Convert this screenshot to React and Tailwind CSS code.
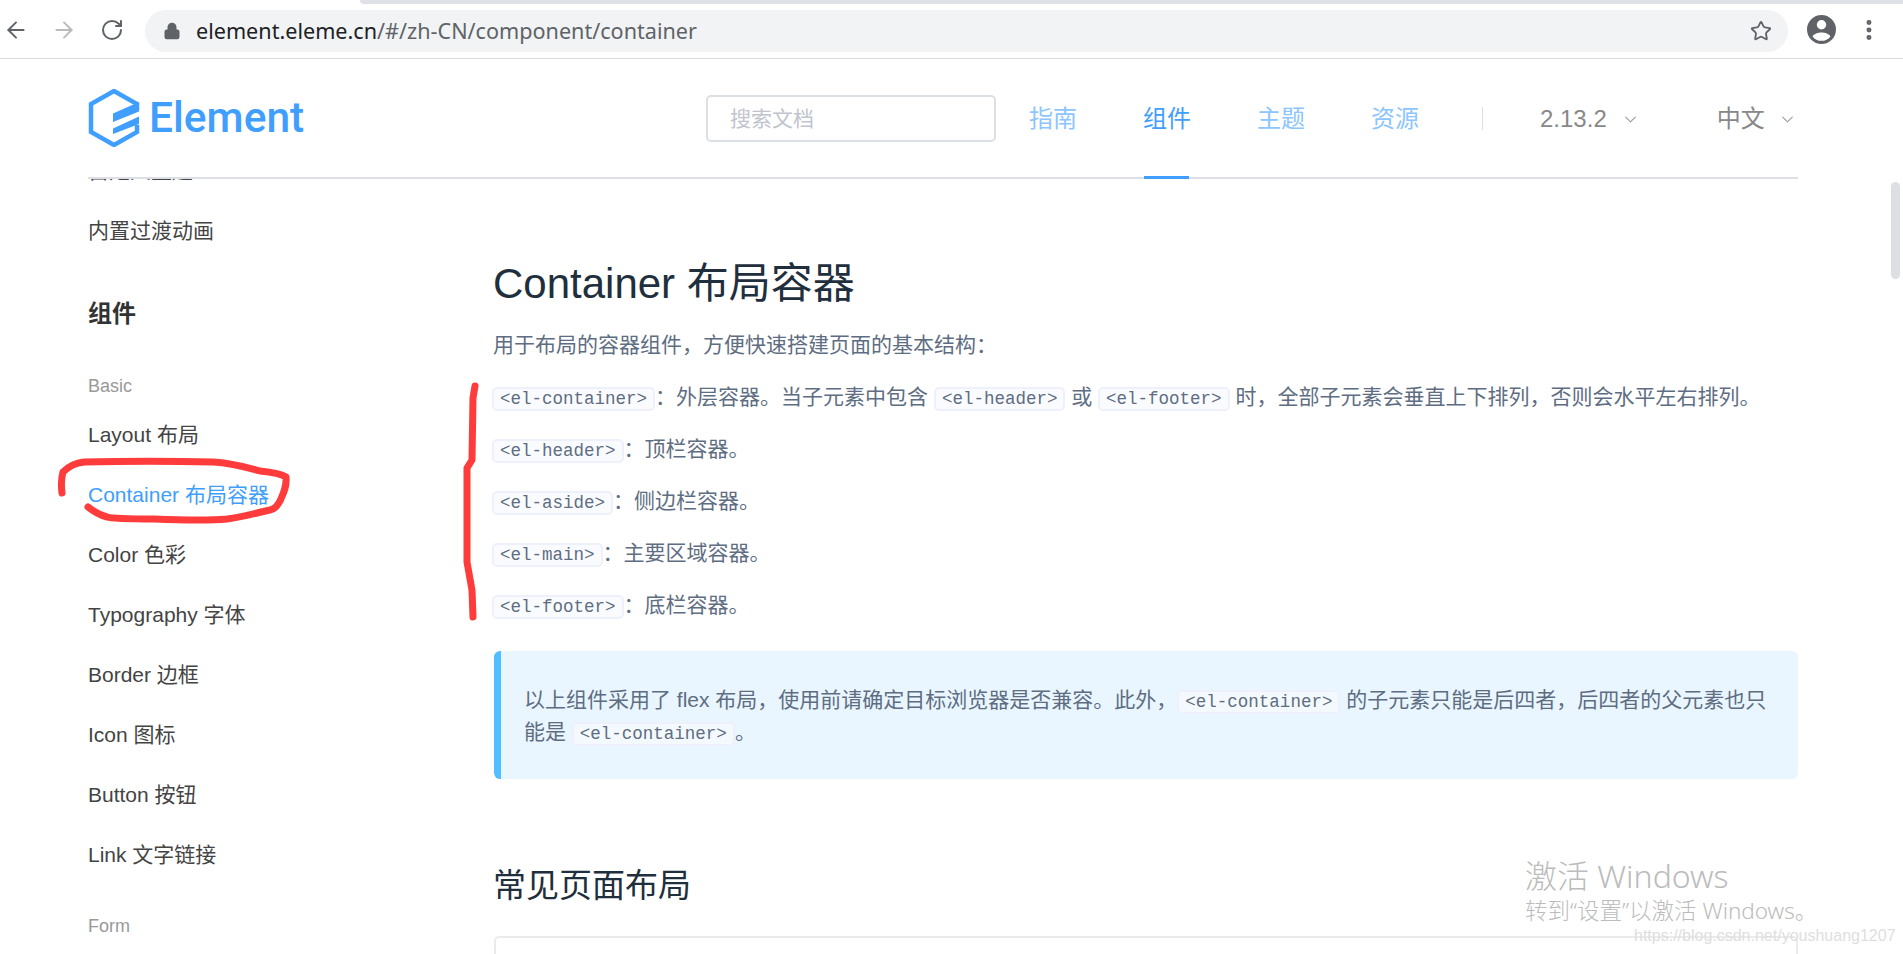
import React from 'react';
import { ArrowLeft, ArrowRight, RotateCw, Lock, Star, MoreVertical, ChevronDown } from 'lucide-react';

const sans = "font-['Liberation_Sans','Noto_Sans_CJK_SC',sans-serif]";

const menu = ['Layout 布局', 'Container 布局容器', 'Color 色彩', 'Typography 字体', 'Border 边框', 'Icon 图标', 'Button 按钮', 'Link 文字链接'];

const tags = [
  ['<el-header>', '：顶栏容器。'],
  ['<el-aside>', '：侧边栏容器。'],
  ['<el-main>', '：主要区域容器。'],
  ['<el-footer>', '：底栏容器。'],
];

const Code = ({ children, tip }) => (
  <code
    className={`inline-block h-[24px] px-[6px] rounded-[5px] border-2 border-[#eef1fb] font-['Liberation_Mono',monospace] text-[17.5px] leading-[20px] text-[#5e6d82] ${tip ? 'bg-[#f4f9fe]' : 'bg-[#fafbfe]'}`}
  >
    {children}
  </code>
);

const BrowserBar = () => (
  <div className="relative h-[59px] shrink-0 border-b border-[#dcdcdc] bg-white flex items-center">
    {/* tab strip edge */}
    <div className="absolute left-[360px] right-0 top-0 h-[4px] rounded-bl-[4px] bg-[#dee1e6]" />
    <ArrowLeft className="ml-[3px] mt-[2px] w-[26px] h-[26px] text-[#5f6368]" strokeWidth={1.8} />
    <ArrowRight className="ml-[22px] mt-[2px] w-[26px] h-[26px] text-[#b9bbbe]" strokeWidth={1.8} />
    <RotateCw className="ml-[23px] mt-[2px] w-[24px] h-[24px] text-[#5f6368]" strokeWidth={2} />
    <div className="ml-[21px] mt-[3px] w-[1643px] h-[42px] rounded-full bg-[#f1f3f4] flex items-center pl-[18px] pr-[16px]">
      <Lock className="w-[18px] h-[18px] text-[#5f6368] fill-[#5f6368]" strokeWidth={2} />
      <div className="ml-[15px] font-['Noto_Sans',sans-serif] text-[21.6px] leading-[30px] text-[#5f6368]">
        <span className="text-[#202124]">element.eleme.cn</span>/#/zh-CN/component/container
      </div>
      <Star className="ml-auto w-[22px] h-[22px] text-[#5f6368]" strokeWidth={2} />
    </div>
    <svg className="ml-[19px] mt-[1px] w-[29px] h-[29px]" viewBox="0 0 24 24">
      <path fill="#5f6368" d="M12 0a12 12 0 1 0 0 24 12 12 0 0 0 0-24zm0 4.2a3.9 3.9 0 1 1 0 7.8 3.9 3.9 0 0 1 0-7.8zm0 17.2a9.3 9.3 0 0 1-7.4-3.7c.9-2 4.6-3.3 7.4-3.3s6.5 1.3 7.4 3.3a9.3 9.3 0 0 1-7.4 3.7z" />
    </svg>
    <MoreVertical className="ml-[20px] mt-[1px] w-[26px] h-[26px] text-[#5f6368]" strokeWidth={2.6} />
  </div>
);

const Logo = () => (
  <div className="w-[218px] shrink-0 flex items-center">
    <svg className="w-[52px] h-[58px] shrink-0" viewBox="0 0 52 58" fill="none">
      <path d="M49 21V15L26 2 3 15v28l23 13 23-13v-7" stroke="#409eff" strokeWidth="4.5" />
      <path fill="#409eff" d="M25 24.5L51 13v9.5L25 33zM25 39.5L51 27.5v7.5L25 45z" />
    </svg>
    <span className="ml-[9px] font-['Roboto',sans-serif] font-medium text-[42.5px] leading-[50px] text-[#409eff]">Element</span>
  </div>
);

const Header = () => (
  <div className="ml-[88px] mr-[105px] h-[120px] shrink-0 border-b-2 border-[#dcdfe6] flex items-center">
    <Logo />
    <div className={`ml-[400px] w-[290px] h-[47px] shrink-0 rounded-[5px] border-2 border-[#dcdfe6] flex items-center pl-[22px] pt-[2px] text-[21px] text-[#c0c4cc] ${sans}`}>
      搜索文档
    </div>
    <nav className={`h-full flex items-center text-[24px] whitespace-nowrap text-[#8cc5ff] ${sans}`}>
      <a className="ml-[33px] mt-[2px] w-[48px]">指南</a>
      <a className="relative ml-[66px] w-[48px] h-full pt-[2px] flex items-center text-[#409eff]">
        组件
        <span className="absolute left-[1px] right-[2px] -bottom-[2px] h-[3px] bg-[#409eff]" />
      </a>
      <a className="ml-[66px] mt-[2px] w-[48px]">主题</a>
      <a className="ml-[66px] mt-[2px] w-[48px]">资源</a>
    </nav>
    <div className="ml-[63px] w-px h-[23px] bg-[#dcdfe6]" />
    <div className={`ml-[57px] mt-[2px] flex items-center whitespace-nowrap text-[24px] text-[#888888] ${sans}`}>
      2.13.2
      <ChevronDown className="ml-[14px] w-[19px] h-[19px] text-[#a0a0a0]" strokeWidth={1.5} />
    </div>
    <div className={`ml-[77px] mt-[2px] flex items-center whitespace-nowrap text-[24px] text-[#888888] ${sans}`}>
      中文
      <ChevronDown className="ml-[13px] w-[19px] h-[19px] text-[#a0a0a0]" strokeWidth={1.5} />
    </div>
  </div>
);

const Sidebar = () => (
  <aside className={`w-[494px] shrink-0 pl-[88px] overflow-hidden text-[21px] text-[#444444] ${sans}`}>
    <div className="-mt-[38px] h-[60px] leading-[60px]">自定义主题</div>
    <div className="h-[60px] leading-[60px]">内置过渡动画</div>
    <div className="mt-[33px] h-[40px] leading-[40px] text-[24px] font-bold text-[#333333]">组件</div>
    <div className="mt-[37px] h-[30px] leading-[30px] text-[18px] text-[#999999]">Basic</div>
    <div className="mt-[4px]">
      {menu.map((item, idx) => (
        <div key={idx} className={`h-[60px] leading-[60px] ${idx === 1 ? 'text-[#409eff]' : ''}`}>
          {item}
        </div>
      ))}
    </div>
    <div className="mt-[26px] h-[30px] leading-[30px] text-[18px] text-[#999999]">Form</div>
  </aside>
);

const Content = () => (
  <main className={`w-[1304px] shrink-0 text-[21px] text-[#5e6d82] ${sans}`}>
    <h2 className="mt-[77px] -ml-px h-[56px] leading-[56px] text-[42px] font-normal text-[#1f2f3d]">Container 布局容器</h2>
    <p className="mt-[17px] -ml-px h-[32px] leading-[32px]">用于布局的容器组件，方便快速搭建页面的基本结构：</p>

    <div className="mt-[20px] -ml-[2px] flex flex-col gap-[20px]">
      <p className="h-[32px] leading-[32px] whitespace-nowrap">
        <Code>{'<el-container>'}</Code>：外层容器。当子元素中包含 <Code>{'<el-header>'}</Code> 或 <Code>{'<el-footer>'}</Code> 时，全部子元素会垂直上下排列，否则会水平左右排列。
      </p>
      {tags.map(([tag, text]) => (
        <p key={tag} className="h-[32px] leading-[32px]">
          <Code>{tag}</Code>{text}
        </p>
      ))}
    </div>

    {/* Tip */}
    <div className="mt-[30px] h-[128px] rounded-[6px] border-l-[7px] border-[#50bfff] bg-[#e9f6ff] pl-[23px] pr-[26px] py-[33px] leading-[32px]">
      以上组件采用了 flex 布局，使用前请确定目标浏览器是否兼容。此外，<Code tip>{'<el-container>'}</Code> 的子元素只能是后四者，后四者的父元素也只能是 <Code tip>{'<el-container>'}</Code>。
    </div>

    <h3 className="mt-[87px] -ml-px h-[40px] leading-[40px] text-[33px] font-normal text-[#1f2f3d]">常见页面布局</h3>
    <div className="mt-[30px] h-[300px] rounded-[5px] border-2 border-[#ebebeb]" />
  </main>
);

const Annotations = () => (
  <svg className="absolute left-0 top-0 w-[500px] h-[640px] pointer-events-none" viewBox="0 0 500 640" fill="none">
    <path
      d="M62 493C61 485 61 479 63 472C68 467 75 463 84 462C124 461 174 461 213 462C231 463 246 467 260 471C270 472 280 473 286 477C287 487 283 494 280 501C277 506 275 509 270 510C256 513 243 517 227 519C207 521 177 520 154 519C129 519 113 519 107 517C99 515 93 511 88 507"
      stroke="#ff3b3b" strokeWidth="7" strokeLinecap="round" strokeLinejoin="round"
    />
    <path
      d="M475 386l-2 12-1 62-5 8v94l5 28 1 27"
      stroke="#ff3b3b" strokeWidth="7" strokeLinecap="round" strokeLinejoin="round"
    />
  </svg>
);

const App = () => (
  <div className="relative w-[1903px] h-[954px] overflow-hidden bg-white flex flex-col">
    <BrowserBar />
    <Header />
    <div className="flex min-h-0 flex-1">
      <Sidebar />
      <Content />
    </div>

    {/* Scrollbar thumb */}
    <div className="absolute left-[1891px] top-[182px] w-[9px] h-[97px] rounded-full bg-[#dddfe2]" />

    <Annotations />

    {/* Watermarks */}
    <div className="absolute left-[1525px] top-[855px] font-['Noto_Sans','Noto_Sans_CJK_SC',sans-serif] font-light text-[#bcbcbc] whitespace-nowrap">
      <div className="h-[41px] leading-[42px] text-[32px]">激活 Windows</div>
      <div className="h-[30px] leading-[30px] text-[22.5px]">转到“设置”以激活 Windows。</div>
    </div>
    <div className="absolute left-[1634px] top-[924px] h-[24px] leading-[24px] font-['Liberation_Sans',sans-serif] text-[16px] text-[#dedede] whitespace-nowrap">
      https://blog.csdn.net/youshuang1207
    </div>
  </div>
);

export default App;
